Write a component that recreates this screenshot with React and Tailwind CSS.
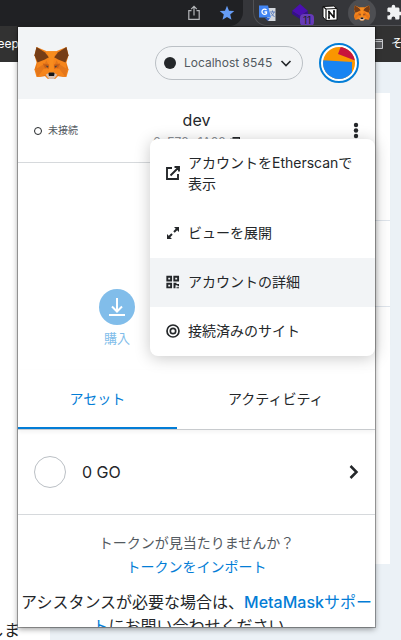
import React from "react";

function Fox({ className }) {
  return (
    <svg viewBox="0 0 33 31" className={className} aria-hidden="true">
      <path fill="#f6851b" d="M2 0l10 4h9l10-4 2 8-2 7 2 7-2 7-8-1-3 3h-7l-3-3-8 1-2-7 2-7-2-7z" />
      <path fill="#e2761b" d="M3 15l8-3 3 6-4 4H0zM30 15l-8-3-3 6 4 4h10z" />
      <path fill="#f6851b" d="M3 14l9-2-2 4-8 5zM30 14l-9-2 2 4 8 5z" />
      <path fill="#763d16" d="M2 0l8 5 4 5-4 2-7 3-3-7z" />
      <path fill="#763d16" d="M31 0l-8 5-4 5 4 2 7 3 3-7z" />
      <path fill="#f88d1e" d="M12 4h9l-2 6-1 7 1 7h-5l1-7-1-7z" />
      <path fill="#cd6116" d="M8 16l6 1 0 4-4-1zM25 16l-6 1 0 4 4-1z" />
      <path fill="#e4761b" d="M9 21l-8 1 2 7 8-1zM24 21l8 1-2 7-8-1z" />
      <path fill="#f6851b" d="M9 21l5 1-2 5-9 2zM24 21l-5 1 2 5 9 2z" />
      <path fill="#4a4540" d="M10.500 18l3 .3-.6 1.700zM22.500 18l-3 .3.6 1.700z" />
      <path fill="#d7c1b3" d="M11 27l3-2h5l3 2-3 4h-5z" />
      <path fill="#161616" d="M13.500 25.500l1-.8h4l1 .8-.5 2.500h-5z" />
    </svg>
  );
}

function Toolbar() {
  return (
    <header className="flex h-[26px] items-center bg-[#35363a]">
      <div className="flex h-full w-[243px] items-center justify-end gap-[18px] rounded-br-[14px] bg-[#202124] pr-2">
        <button aria-label="Share">
          <svg viewBox="0 0 14 16" className="h-4 w-3.5" fill="none" stroke="#b4b6b9" strokeWidth="1.200">
            <path d="M4.500 5.700H1.800v8.600h10.400V5.700H9.500M7 10.500V1.500M4.200 4.200L7 1.400l2.800 2.800" />
          </svg>
        </button>
        <button aria-label="Bookmark">
          <svg viewBox="0 0 16 16" className="h-4 w-4" fill="#669df6">
            <path d="M8 .8l2 4.900 5.300.4-4.100 3.400 1.300 5.200L8 11.900l-4.500 2.800 1.300-5.200L.7 6.100 6 5.700z" />
          </svg>
        </button>
      </div>
      <div className="ml-2.5 flex h-full min-w-0 flex-1 items-center overflow-hidden rounded-bl-[14px] border-b border-l border-[#505155] pl-1">
        <button aria-label="Translate" className="shrink-0">
          <svg viewBox="0 0 18 18" className="h-[18px] w-[18px]">
            <path fill="#d4d8de" d="M7 4h10.500v13H10z" />
            <path fill="#3367d6" d="M7 14h5l-2 3z" />
            <path fill="#4285f4" d="M1 1.500h9l3 12H1z" />
            <path fill="none" stroke="#fff" strokeWidth="1.300" d="M8.500 6a2.600 2.600 0 1 0 0 3.500V8H6.500" />
            <path fill="none" stroke="#5f7fbd" d="M12 8h5M14.500 6.500V8M16 8c-.5 2-1.500 3-2.500 4M13 9l3.500 4" />
          </svg>
        </button>
        <button aria-label="Blocks" className="relative ml-4 shrink-0">
          <svg viewBox="0 0 20 18" className="h-[18px] w-5">
            <path fill="#4b0fb0" d="M8 0l8 7-8 5-8-5z" />
            <path fill="#35108a" d="M0 7l8 5 8-5v3l-8 5-8-5z" />
          </svg>
          <span className="absolute left-2 top-2.5 flex h-3 w-3.5 items-center justify-center rounded-sm bg-[#673ab7] text-[10px] leading-3 text-[#202124]">11</span>
        </button>
        <button aria-label="Notion" className="ml-2.5 shrink-0">
          <svg viewBox="0 0 16 16" className="h-4 w-4" strokeLinejoin="round">
            <path fill="#fff" stroke="#111" d="M1 1.500L11.500 1 15 3.500V15L4 15.500 1 12z" />
            <path fill="none" stroke="#111" strokeWidth="1.200" d="M1 1.500l3 2.500v11.500M4 4l11-.5" />
            <path fill="none" stroke="#111" strokeWidth="1.600" d="M7 13V6.500l5 6V6M6 6.500h1.500M11 6h2M6 13h2" />
          </svg>
        </button>
        <button aria-label="MetaMask" className="ml-2.5 flex h-7 w-7 shrink-0 items-center justify-center rounded-full bg-[#4d4e52]">
          <Fox className="h-4 w-4" />
        </button>
        <button aria-label="Extensions" className="ml-2.5 shrink-0">
          <svg viewBox="0 0 24 24" className="h-[17px] w-[17px]" fill="#f1f3f4">
            <path d="M20.500 11H19V7c0-1.100-.9-2-2-2h-4V3.500a2.500 2.500 0 0 0-5 0V5H4c-1.100 0-2 .9-2 2v3.800h1.500a2.700 2.700 0 0 1 0 5.400H2V20c0 1.100.9 2 2 2h3.800v-1.500a2.700 2.700 0 0 1 5.400 0V22H17c1.100 0 2-.9 2-2v-4h1.500a2.500 2.500 0 0 0 0-5z" />
          </svg>
        </button>
      </div>
    </header>
  );
}

function Backdrop() {
  return (
    <>
      <nav className="flex h-9 items-center justify-between overflow-hidden bg-[#323232] text-xs text-white">
        <a href="#keep" className="-ml-2.5">Keep</a>
        <a href="#folder" className="-mr-0.5 flex items-center gap-2">
          <svg viewBox="0 0 12 12" className="h-3 w-3" fill="#5b5c5f" stroke="#c6c8cb">
            <path d="M.5 1.500h11v9H.5zM.5 3.500h11" />
          </svg>
          そ
        </a>
      </nav>
      <main className="flex flex-1 bg-[#ebf1f6]">
        <div className="flex w-[50px] shrink-0 flex-col justify-end overflow-hidden bg-white">
          <p className="-ml-3 text-base leading-5 text-[#222]">しま</p>
        </div>
        <div className="mr-[11px] mt-[31px] h-[471px] flex-1 bg-white">
          <div className="h-[128px] border-b border-[#dfe5ec]" />
          <div className="h-[86px] border-b border-[#dfe5ec]" />
        </div>
      </main>
    </>
  );
}

function PopupHeader() {
  return (
    <div className="flex h-[72px] items-center bg-[#f2f4f6] px-4">
      <Fox className="h-8 w-[35px]" />
      <button className="ml-auto flex h-[34px] w-[148px] items-center rounded-full border border-[#bbc0c5] px-2 text-xs text-[#535a61]">
        <span className="h-3 w-3 rounded-full bg-[#24272a]" />
        <span className="ml-2">Localhost 8545</span>
        <svg viewBox="0 0 12 12" className="ml-auto mr-0.5 h-3 w-3" fill="none" stroke="#24272a" strokeWidth="1.600">
          <path d="M1.500 4L6 8.500 10.500 4" />
        </svg>
      </button>
      <button aria-label="アカウント" className="ml-4 h-10 w-10">
        <svg viewBox="0 0 40 40" className="h-10 w-10">
          <circle cx="20" cy="20" r="19" fill="#fff" stroke="#037dd6" strokeWidth="2" />
          <clipPath id="avatar"><circle cx="20" cy="20" r="16" /></clipPath>
          <g clipPath="url(#avatar)">
            <path fill="#fa9600" d="M0 0h40v40H0z" />
            <path fill="#c8143c" d="M22 3l18 9v7L19 11z" />
            <path fill="#1884f2" d="M0 17l33 2v21H0z" />
          </g>
        </svg>
      </button>
    </div>
  );
}

function AccountBar() {
  return (
    <div className="grid h-16 grid-cols-[1fr_auto_1fr] border-b border-[#d6d9dc] px-4">
      <div className="flex items-center gap-1.5 text-[10px] text-[#535a61]">
        <span className="h-2 w-2 rounded-full border border-[#24272a]" />
        未接続
      </div>
      <div className="flex flex-col items-center gap-0.5 pt-[9px]">
        <h1 className="text-base leading-6 text-[#24272a]">dev</h1>
        <p className="flex items-center gap-1 text-xs leading-4 text-[#8b9096]">
          0xE78...1A08
          <svg viewBox="0 0 10 10" className="h-2.5 w-2.5" fill="none" stroke="#24272a" strokeWidth="1.400">
            <path d="M2.500.7h6.800v6.800M.7 2.500h6.800v6.800H.7z" />
          </svg>
        </p>
      </div>
      <button aria-label="オプション" className="flex items-center justify-end">
        <svg viewBox="0 0 6 18" className="h-[18px] w-1.5" fill="#24272a">
          <circle cx="3" cy="3" r="2.200" />
          <circle cx="3" cy="8.500" r="2.200" />
          <circle cx="3" cy="14" r="2.200" />
        </svg>
      </button>
    </div>
  );
}

const menuItems = [
  {
    label: "アカウントをEtherscanで表示",
    icon: <path fill="none" stroke="#24272a" strokeWidth="1.900" d="M6 2H1v11h11V8M4.500 9.500L13 1M8.500 1H13v4.500" />,
  },
  {
    label: "ビューを展開",
    icon: (
      <g>
        <path fill="none" stroke="#24272a" strokeWidth="2" d="M8 6l4-4M6 8l-4 4" />
        <path fill="#24272a" d="M8 1h5v5zM1 8v5h5z" />
      </g>
    ),
  },
  {
    label: "アカウントの詳細",
    active: true,
    icon: (
      <g>
        <path fill="none" stroke="#24272a" strokeWidth="1.900" d="M1.300 1.800h3.800v3.700H1.300zM8.300 1.800h3.800v3.700H8.300zM1.300 8.700h3.800v3.700H1.300z" />
        <path fill="#24272a" d="M7.500 7.800h3V9h2.500v2.300h-1.500v-1h-2v3h-2zM10.500 12.300H13v1h-2.500z" />
      </g>
    ),
  },
  {
    label: "接続済みのサイト",
    icon: (
      <g fill="none" stroke="#24272a" strokeWidth="1.700">
        <circle cx="7" cy="7" r="6" />
        <circle cx="7" cy="7" r="2.700" />
      </g>
    ),
  },
];

function AccountMenu() {
  return (
    <div role="menu" className="absolute right-[26px] top-[139px] w-[225px] overflow-hidden rounded-lg bg-white shadow-[0_2px_16px_rgba(0,0,0,0.22)]">
      {menuItems.map((item) => (
        <button
          key={item.label}
          role="menuitem"
          className={`flex w-full items-center gap-2 px-4 pb-[15px] pt-[13px] text-left text-sm leading-[21px] text-[#24272a] ${item.active ? "bg-[#f2f4f6]" : ""}`}
        >
          <svg viewBox="0 0 14 14" className="h-3.5 w-3.5 shrink-0" aria-hidden="true">{item.icon}</svg>
          <span>{item.label}</span>
        </button>
      ))}
    </div>
  );
}

function Popup() {
  return (
    <section className="absolute left-[18px] right-[26px] top-[27px] h-[600px] overflow-hidden bg-white shadow-[0_0_0_1px_rgba(0,0,0,0.3),0_2px_6px_rgba(0,0,0,0.4)]">
      <PopupHeader />
      <AccountBar />
      <div className="flex h-[207px] items-end pb-6 pl-[81px]">
        <button className="flex flex-col items-center gap-[5px] text-[13px] leading-4 text-[#81bdea]">
          <span className="flex h-9 w-9 items-center justify-center rounded-full bg-[#81bdea]">
            <svg viewBox="0 0 18 18" className="h-[18px] w-[18px]" fill="none" stroke="#fff" strokeWidth="2">
              <path d="M9 0v13M4 8.500l5 5 5-5M1 17h16" />
            </svg>
          </span>
          購入
        </button>
      </div>
      <div role="tablist" className="flex h-[60px] border-b border-[#c8cbce] text-sm shadow-[0_2px_4px_rgba(0,0,0,0.05)]">
        <button role="tab" aria-selected="true" className="flex-auto border-b-2 border-[#037dd6] text-[#037dd6]">アセット</button>
        <button role="tab" aria-selected="false" className="flex-auto border-b-2 border-transparent text-[#24272a]">アクティビティ</button>
      </div>
      <button className="flex h-[85px] w-full items-center border-b border-[#d6d9dc] px-4 text-base text-[#24272a]">
        <span className="mr-4 h-8 w-8 rounded-full border border-[#bbc0c5]" />
        0 GO
        <svg viewBox="0 0 10 14" className="ml-auto h-3.5 w-2.5" fill="none" stroke="#24272a" strokeWidth="2.500">
          <path d="M1.500 1L7.500 7l-6 6" />
        </svg>
      </button>
      <div className="flex flex-col items-center pt-4 text-sm leading-6">
        <p className="text-[#535a61]">トークンが見当たりませんか？</p>
        <a href="#import" className="text-[#037dd6]">トークンをインポート</a>
      </div>
      <p className="pt-[11px] text-center text-base leading-6 text-[#24272a]">
        アシスタンスが必要な場合は、<a href="#support" className="text-[#037dd6]"><span className="font-medium">MetaMask</span>サポート</a>にお問い合わせください。
      </p>
    </section>
  );
}

export default function App() {
  return (
    <div lang="ja" className="relative flex h-screen min-h-[640px] flex-col overflow-hidden font-['Inter','Noto_Sans_CJK_JP',sans-serif]">
      <Toolbar />
      <Backdrop />
      <Popup />
      <AccountMenu />
    </div>
  );
}
